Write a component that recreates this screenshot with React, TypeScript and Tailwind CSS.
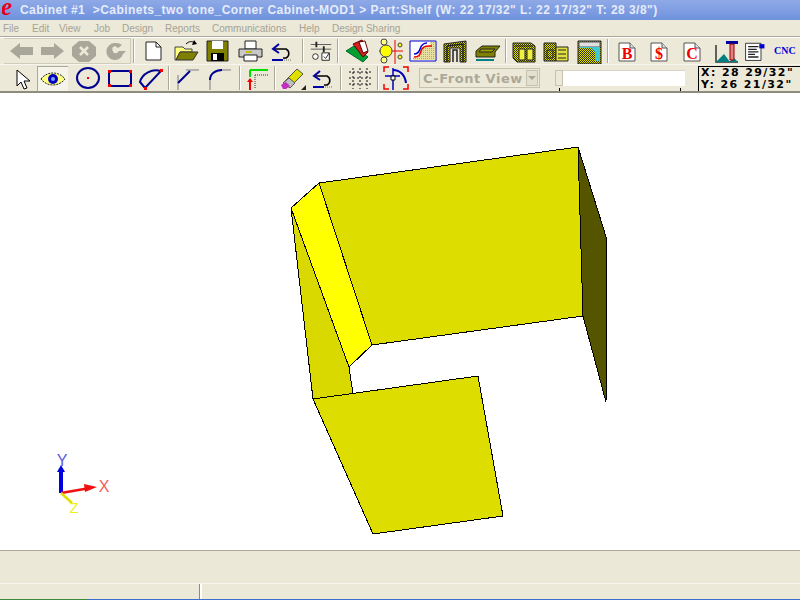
import type { ReactNode } from "react";

const menus = [
  { label: "File", w: "w-[29px]" },
  { label: "Edit", w: "w-[27px]" },
  { label: "View", w: "w-[35px]" },
  { label: "Job", w: "w-[28px]" },
  { label: "Design", w: "w-[43px]" },
  { label: "Reports", w: "w-[47px]" },
  { label: "Communications", w: "w-[87px]" },
  { label: "Help", w: "w-[33px]" },
  { label: "Design Sharing", w: "w-[90px]" },
];

function Ico({ children }: { children: ReactNode }) {
  return (
    <svg width="28" height="26" viewBox="0 0 28 26" className="block">
      {children}
    </svg>
  );
}

function Cell({ w, children }: { w: string; children: ReactNode }) {
  return <div className={`${w} h-full shrink-0 flex items-center justify-center`}>{children}</div>;
}

function Sep({ w }: { w: string }) {
  return (
    <div className={`${w} h-full shrink-0 flex items-center justify-center`}>
      <div className="w-[2px] h-[24px] border-l border-[#aca899] bg-white" />
    </div>
  );
}

const grey = "#a9a799";

function Doc({ letter }: { letter: string }) {
  return (
    <Ico>
      <path d="M6 5h11l5 5v13H6z" fill="#fff" stroke="#555" />
      <path d="M17 5v5h5" fill="#ddd" stroke="#555" />
      <text x="14" y="20.500" textAnchor="middle" fontFamily="'Liberation Serif', serif" fontWeight="700" fontSize="16" fill="#f00000">
        {letter}
      </text>
    </Ico>
  );
}

function Undo() {
  return (
    <Ico>
      <path d="M6 11h12a5 5 0 0 1 0 9h-3" fill="none" stroke="#000" strokeWidth="1.5" />
      <path d="M11 6l-6 5 6 4" fill="none" stroke="#0000a8" strokeWidth="2" />
      <path d="M4 22h11" stroke="#0000a8" strokeWidth="2" />
      <path d="M16 22h8" stroke="#777" strokeDasharray="1 1" />
    </Ico>
  );
}

function Toolbar1() {
  return (
    <div className="h-[27px] shrink-0 flex items-center pl-[4px] border-t border-white bg-[#ece9d8]">
      <div className="w-[127px] h-[26px] shrink-0 flex items-center border-y border-r border-[#cfccba]">
        <Cell w="w-[33px]">
          <Ico><path d="M3 13l10-8v4h13v8H13v4z" fill={grey} /></Ico>
        </Cell>
        <Cell w="w-[31px]">
          <Ico><path d="M25 13l-10-8v4H2v8h13v4z" fill={grey} /></Ico>
        </Cell>
        <Cell w="w-[31px]">
          <Ico>
            <path d="M9 3h10l7 6v9l-7 6H9l-7-6V9z" fill={grey} />
            <path d="M10 9l8 8M18 9l-8 8" stroke="#ece9d8" strokeWidth="2.5" />
          </Ico>
        </Cell>
        <Cell w="w-[31px]">
          <Ico>
            <path d="M14 5a8.500 8.500 0 1 0 8 11l3-3h-7l-2 2a3 3 0 1 1-2-7l3 2 4-3a9 9 0 0 0-7-2z" fill={grey} />
          </Ico>
        </Cell>
      </div>
      <Sep w="w-[6px]" />
      <Cell w="w-[32px]">
        <Ico>
          <path d="M7 4h10l5 5v13H7z" fill="#fff" stroke="#222" />
          <path d="M17 4v5h5" fill="none" stroke="#222" />
        </Ico>
      </Cell>
      <Cell w="w-[33px]">
        <Ico>
          <path d="M3 9h8l2 2h7v3H8L4 22H3z" fill="#ffff80" stroke="#444" />
          <path d="M8 14h18l-5 8H4z" fill="#808000" stroke="#333" />
          <path d="M14 6c3-3 6-3 9-1" fill="none" stroke="#000" />
          <path d="M22 2l3 4-5 1z" fill="#000" />
        </Ico>
      </Cell>
      <Cell w="w-[32px]">
        <Ico>
          <path d="M3 3h21v20H3z" fill="#808000" stroke="#222" />
          <path d="M8 3h11v8H8z" fill="#fff" />
          <path d="M7 15h13v8H7z" fill="#000" />
          <path d="M9 16h4v6H9z" fill="#fff" />
        </Ico>
      </Cell>
      <Cell w="w-[32px]">
        <Ico>
          <path d="M9 3h11v8H9z" fill="#fff" stroke="#222" />
          <path d="M3 11h23v8H3z" fill="#c8c8c8" stroke="#222" />
          <path d="M8 17h13v6H8z" fill="#fff" stroke="#222" />
          <path d="M10 14h6" stroke="#c0c000" strokeWidth="2" />
        </Ico>
      </Cell>
      <Cell w="w-[32px]"><Undo /></Cell>
      <Sep w="w-[10px]" />
      <Cell w="w-[26px]">
        <Ico>
          <path d="M3 6h22M3 11h22" stroke="#555" />
          <path d="M9 3v6M17 8v6" stroke="#222" strokeWidth="2" />
          <circle cx="8" cy="19" r="3" fill="#fff" stroke="#222" />
          <path d="M15 15h8v8h-8z" fill="#fff" stroke="#222" />
          <path d="M17 19l2 2 4-6" fill="none" stroke="#222" />
        </Ico>
      </Cell>
      <Sep w="w-[8px]" />
      <Cell w="w-[32px]">
        <Ico>
          <path d="M2 13l8-5 14 11-5 5z" fill="#00a030" stroke="#063" />
          <path d="M9 6l9-4 6 12-5 5z" fill="#d02020" stroke="#600" />
          <path d="M15 4l6-1 3 10-5 2z" fill="#fff" stroke="#600" />
        </Ico>
      </Cell>
      <Cell w="w-[33px]">
        <Ico>
          <path d="M18 2v24M2 13h24" stroke="#f00000" />
          <circle cx="9" cy="13" r="6" fill="#ffff00" stroke="#444" />
          <circle cx="7" cy="4" r="3" fill="#ffff80" stroke="#444" />
          <circle cx="7" cy="22" r="3" fill="#ffff80" stroke="#444" />
          <circle cx="23" cy="7" r="2" fill="#ffff00" stroke="#444" />
          <circle cx="23" cy="19" r="2" fill="#ffff00" stroke="#444" />
        </Ico>
      </Cell>
      <Cell w="w-[32px]">
        <svg width="28" height="22" viewBox="0 0 28 22">
          <path d="M1 1h26v20H1z" fill="#fff" stroke="#0000d0" />
          <path d="M4 20v-3c5 0 6-2 7-6s4-5 8-5h2V2h5v18z" fill="url(#dither-soft)" />
          <path d="M5 17c5 0 6-2 7-6s4-5 8-5h3" fill="none" stroke="#f00000" strokeWidth="1.500" />
          <path d="M5 14c4 0 5-2 6-5s3-6 7-6" fill="none" stroke="#0000d0" strokeWidth="1.500" />
        </svg>
      </Cell>
      <Cell w="w-[33px]">
        <Ico>
          <path d="M2 6l22-3v21h-6V10H8v14H2z" fill="url(#dither)" stroke="#222" />
          <path d="M5 8l16-2v18M11 24V12h4v12M5 8v16" fill="none" stroke="#222" strokeWidth="1.500" />
        </Ico>
      </Cell>
      <Cell w="w-[32px]">
        <Ico>
          <path d="M2 13l6-5h18l-5 6v5H2z" fill="#808000" stroke="#222" />
          <path d="M7 11h14l-3 3H5z" fill="#a0a000" stroke="#222" />
          <path d="M2 22h18" stroke="#008080" strokeWidth="2" />
        </Ico>
      </Cell>
      <Sep w="w-[4px]" />
      <Cell w="w-[31px]">
        <Ico>
          <path d="M3 5h18l4 3v16H7l-4-4z" fill="url(#dither)" stroke="#222" />
          <path d="M5 8h18" stroke="#222" />
          <path d="M9 11h6v11H9zM17 11h6v11h-6z" fill="#f0f040" stroke="#222" />
        </Ico>
      </Cell>
      <Cell w="w-[34px]">
        <Ico>
          <path d="M2 5h12v18H2z" fill="url(#dither)" stroke="#222" />
          <path d="M14 9h12v14H14z" fill="#e0e040" stroke="#222" />
          <path d="M5 12h6v8H5zM16 12h8M16 16h8M16 20h8" fill="none" stroke="#222" />
        </Ico>
      </Cell>
      <Cell w="w-[32px]">
        <Ico>
          <path d="M3 3h23v23H3z" fill="url(#dither)" stroke="#222" />
          <path d="M4 4h21v5H4z" fill="#e0e0e0" stroke="#555" />
          <path d="M4 10h12l4 4v9h5v-14H4z" fill="#40c8d0" />
        </Ico>
      </Cell>
      <Sep w="w-[6px]" />
      <Cell w="w-[32px]"><Doc letter="B" /></Cell>
      <Cell w="w-[32px]"><Doc letter="$" /></Cell>
      <Cell w="w-[34px]"><Doc letter="C" /></Cell>
      <Cell w="w-[34px]">
        <Ico>
          <path d="M4 7v17h22" fill="none" stroke="#333" strokeWidth="1.500" />
          <path d="M4 24l8-8 6 8z" fill="#008080" />
          <path d="M18 24l3-5 5 5z" fill="#008080" />
          <path d="M14 3h12v3H14z" fill="#0000a0" />
          <path d="M18 6h4v16h-4z" fill="#e08080" stroke="#900" />
        </Ico>
      </Cell>
      <Cell w="w-[24px]">
        <Ico>
          <path d="M3 4h18v20H3z" fill="#fff" stroke="#222" />
          <path d="M6 8h12M6 11h10M6 14h12M6 17h8M6 20h12" stroke="#222" strokeWidth="1.500" />
          <path d="M19 5h6v5h-6z" fill="#0000d0" />
        </Ico>
      </Cell>
      <div
        className="ml-[7px] text-[10px] font-bold text-[#0000e0] leading-none whitespace-nowrap"
        style={{ fontFamily: "'Liberation Serif', serif" }}
      >
        CNC
      </div>
    </div>
  );
}

function Toolbar2() {
  return (
    <div className="h-[29px] shrink-0 flex items-center pl-[6px] border-t border-[#f7f6ee] border-b-2 border-b-[#8e8c7e] bg-[#ece9d8]">
      <Cell w="w-[31px]">
        <Ico><path d="M9 5v16l4-4 3 7 3-1-3-7h6z" fill="#fff" stroke="#000" /></Ico>
      </Cell>
      <div className="w-[31px] h-[25px] shrink-0 flex items-center justify-center bg-[#f5f4ea] border-t border-l border-[#aca899]">
        <Ico>
          <path d="M2 13c6-8 18-8 24 0-6 8-18 8-24 0z" fill="#ffff80" stroke="#222" strokeDasharray="2 1" />
          <circle cx="14" cy="13" r="5" fill="#0000c0" />
          <circle cx="14" cy="13" r="2" fill="#80a0ff" />
        </Ico>
      </div>
      <div className="w-[4px] shrink-0" />
      <Cell w="w-[32px]">
        <Ico>
          <ellipse cx="14" cy="13" rx="11" ry="10" fill="none" stroke="#000090" strokeWidth="2" />
          <path d="M13 12h2v2h-2z" fill="#f00000" />
        </Ico>
      </Cell>
      <Cell w="w-[31px]">
        <Ico>
          <path d="M3 6h22v15H3z" fill="none" stroke="#000090" strokeWidth="2" />
          <path d="M2 5h3v3H2zM23 5h3v3h-3zM2 19h3v3H2zM23 19h3v3h-3z" fill="#f00000" />
        </Ico>
      </Cell>
      <Cell w="w-[31px]">
        <Ico>
          <path d="M8 23L3 17C5 9 15 3 24 6z" fill="none" stroke="#000090" strokeWidth="2" />
          <path d="M23 4h3v3h-3zM7 22h3v3H7z" fill="#f00000" />
        </Ico>
      </Cell>
      <Sep w="w-[6px]" />
      <Cell w="w-[31px]">
        <Ico>
          <path d="M12 5h13" stroke="#a0a0a0" strokeWidth="1.500" />
          <path d="M4 10v15" stroke="#a0a0a0" strokeWidth="1.500" />
          <path d="M4 18L16 6" stroke="#000090" strokeWidth="2" />
        </Ico>
      </Cell>
      <Cell w="w-[33px]">
        <Ico>
          <path d="M16 5h9" stroke="#a0a0a0" strokeWidth="1.500" />
          <path d="M4 14v11" stroke="#a0a0a0" strokeWidth="1.500" />
          <path d="M4 15c0-6 5-10 12-10" fill="none" stroke="#000090" strokeWidth="2" />
        </Ico>
      </Cell>
      <Sep w="w-[8px]" />
      <Cell w="w-[28px]">
        <Ico>
          <path d="M6 5h18" stroke="#00e000" strokeWidth="2" />
          <path d="M6 5v7" stroke="#00e000" strokeWidth="2" />
          <path d="M11 10h13M11 10v14" stroke="#333" strokeDasharray="1 1" />
          <path d="M6 14v11" stroke="#f00000" strokeWidth="2" />
          <path d="M3 17l3-4 3 4z" fill="#f00000" />
        </Ico>
      </Cell>
      <Sep w="w-[5px]" />
      <Cell w="w-[31px]">
        <Ico>
          <path d="M4 18L18 4l6 5-13 13z" fill="#e0e000" stroke="#553" />
          <path d="M4 18l6-5 6 5-5 5z" fill="#c0c0c0" stroke="#555" />
          <path d="M2 20l5-3 4 4-4 3H4z" fill="#c030c0" />
          <path d="M22 25l5-5v5z" fill="#222" />
        </Ico>
      </Cell>
      <Cell w="w-[29px]"><Undo /></Cell>
      <Sep w="w-[8px]" />
      <Cell w="w-[30px]">
        <Ico>
          <path d="M3 7h22M3 13h22M3 19h22M7 3v21M14 3v21M21 3v21" stroke="#111" strokeDasharray="2 2" />
        </Ico>
      </Cell>
      <Sep w="w-[6px]" />
      <Cell w="w-[30px]">
        <Ico>
          <path d="M2 7V2h5M21 2h5v5M2 19v5h5M21 24h5v-5" fill="none" stroke="#f00000" strokeWidth="1.500" />
          <path d="M11 3v22M3 11h15" stroke="#0000c0" strokeWidth="1.500" />
          <path d="M11 5c7 0 12 5 13 13" fill="none" stroke="#0000c0" strokeWidth="2" />
          <path d="M9 11h4v4H9z" fill="#fff" stroke="#000" />
        </Ico>
      </Cell>
      <div className="ml-[8px] w-[121px] h-[20px] shrink-0 flex items-center justify-between pl-[3px] pr-[1px] bg-[#ece9d8] border border-[#c5c2b0] overflow-hidden">
        <span className="text-[13px] font-bold tracking-[0.5px] text-[#aca899] leading-none whitespace-nowrap" style={{ fontFamily: "'DejaVu Sans', sans-serif" }}>
          C-Front View
        </span>
        <span className="w-[12px] h-[16px] shrink-0 flex items-center justify-center bg-[#e3e0cf] border border-[#c5c2b0]">
          <span className="w-0 h-0 border-x-[4px] border-x-transparent border-t-[4px] border-t-[#aca899]" />
        </span>
      </div>
      <div className="ml-[15px] w-[130px] h-[26px] shrink-0 flex flex-col pt-[5px]">
        <div className="h-[16px] flex">
          <div className="w-[8px] bg-[#ece9d8] border border-[#c5c2b0]" />
          <div className="flex-1 bg-white border-t border-[#d8d5c4]" />
        </div>
        <div className="h-[5px] flex justify-between px-[4px] pt-[2px]">
          <div className="w-[1px] h-[3px] bg-black" />
          <div className="w-[1px] h-[3px] bg-black" />
        </div>
      </div>
      <div
        className="ml-[13px] flex-1 self-end h-[25px] flex flex-col justify-center pl-[2px] bg-[#ece9d8] border-t border-l border-black text-[11px] font-semibold tracking-[1.4px] leading-[12px] text-black whitespace-nowrap overflow-hidden"
        style={{ fontFamily: "'DejaVu Sans', sans-serif" }}
      >
        <div>X: 28 29/32"</div>
        <div>Y: 26 21/32"</div>
      </div>
    </div>
  );
}

function Model() {
  return (
    <svg viewBox="0 93 800 457" className="block w-full h-full" shapeRendering="crispEdges">
      <g stroke="#000" strokeWidth="1">
        <path d="M291 208L313 399L353 394L349 367Z" fill="#d9d900" />
        <path d="M319 183L578 147L583 316L372 345Z" fill="#dddd00" />
        <path d="M291 208L319 183L372 345L349 367Z" fill="#ffff00" />
        <path d="M578 147L607 240L606 402L583 316Z" fill="#555500" />
        <path d="M313 399L478 376L503 516L373 534Z" fill="#dddd00" />
      </g>
      <g shapeRendering="auto">
        <path d="M61 493V470" stroke="#0000e0" strokeWidth="4" />
        <path d="M57 472l4-7 4 7z" fill="#0000e0" />
        <path d="M61 493L90 488" stroke="#f01010" strokeWidth="2.500" />
        <path d="M84 484l13 3-12 5z" fill="#f01010" />
        <path d="M61 493L72 503" stroke="#e0e000" strokeWidth="2.500" />
        <text x="62" y="466" textAnchor="middle" fontSize="16" fill="#5a5ae0" fontFamily="'Liberation Sans', sans-serif">Y</text>
        <text x="104" y="492" textAnchor="middle" fontSize="16" fill="#f06060" fontFamily="'Liberation Sans', sans-serif">X</text>
        <text x="74" y="513" textAnchor="middle" fontSize="15" fill="#f0f020" fontFamily="'Liberation Sans', sans-serif">Z</text>
      </g>
    </svg>
  );
}

export default function App() {
  return (
    <div className="w-[800px] h-[600px] flex flex-col overflow-hidden bg-white" style={{ fontFamily: "'Liberation Sans', sans-serif" }}>
      {/* shared fill patterns for the toolbar icons */}
      <svg width="0" height="0" className="block shrink-0">
        <defs>
          <pattern id="dither" width="2" height="2" patternUnits="userSpaceOnUse">
            <rect width="2" height="2" fill="#e0e000" />
            <rect width="1" height="1" fill="#333300" />
            <rect x="1" y="1" width="1" height="1" fill="#333300" />
          </pattern>
          <pattern id="dither-soft" width="2" height="2" patternUnits="userSpaceOnUse">
            <rect width="2" height="2" fill="#e8e0a0" />
            <rect width="1" height="1" fill="#a8a890" />
          </pattern>
        </defs>
      </svg>

      {/* Title bar */}
      <div className="h-[20px] shrink-0 flex items-center pl-[2px] bg-gradient-to-b from-[#8fa9e6] to-[#6f92de] whitespace-nowrap">
        <svg width="18" height="20" viewBox="0 0 18 20" className="block shrink-0">
          <text x="-1" y="15" fontFamily="'Liberation Serif', serif" fontWeight="700" fontStyle="italic" fontSize="25" fill="#e8001c">
            e
          </text>
        </svg>
        <span className="text-[12px] font-bold tracking-[0.45px] text-[#e6ecfa] leading-none" style={{ whiteSpace: "pre" }}>
          Cabinet #1  &gt;Cabinets_two tone_Corner Cabinet-MOD1 &gt; Part:Shelf (W: 22 17/32" L: 22 17/32" T: 28 3/8")
        </span>
      </div>

      {/* Menu */}
      <div className="h-[17px] shrink-0 flex items-center pl-[3px] bg-[#ece9d8] text-[10px] text-[#a5a395] border-b border-[#aca899]">
        {menus.map((m) => (
          <span key={m.label} className={`${m.w} shrink-0 whitespace-nowrap`}>
            {m.label}
          </span>
        ))}
      </div>

      <Toolbar1 />
      <Toolbar2 />

      <div className="flex-1 min-h-0 bg-white">
        <Model />
      </div>

      {/* Status */}
      <div className="h-[33px] shrink-0 bg-[#ebe8d8] border-t border-[#aca899]" />
      <div className="h-[17px] shrink-0 flex flex-col bg-[#ece9d8] border-t border-[#f8f7f0]">
        <div className="flex-1 flex">
          <div className="w-[200px] border-r border-[#8e8c7e]" />
          <div className="w-[2px] bg-white" />
        </div>
        <div className="h-[1px] flex">
          <div className="w-[88px] bg-[#3c8a3c]" />
          <div className="flex-1 bg-[#3d6fd0]" />
        </div>
      </div>
    </div>
  );
}
